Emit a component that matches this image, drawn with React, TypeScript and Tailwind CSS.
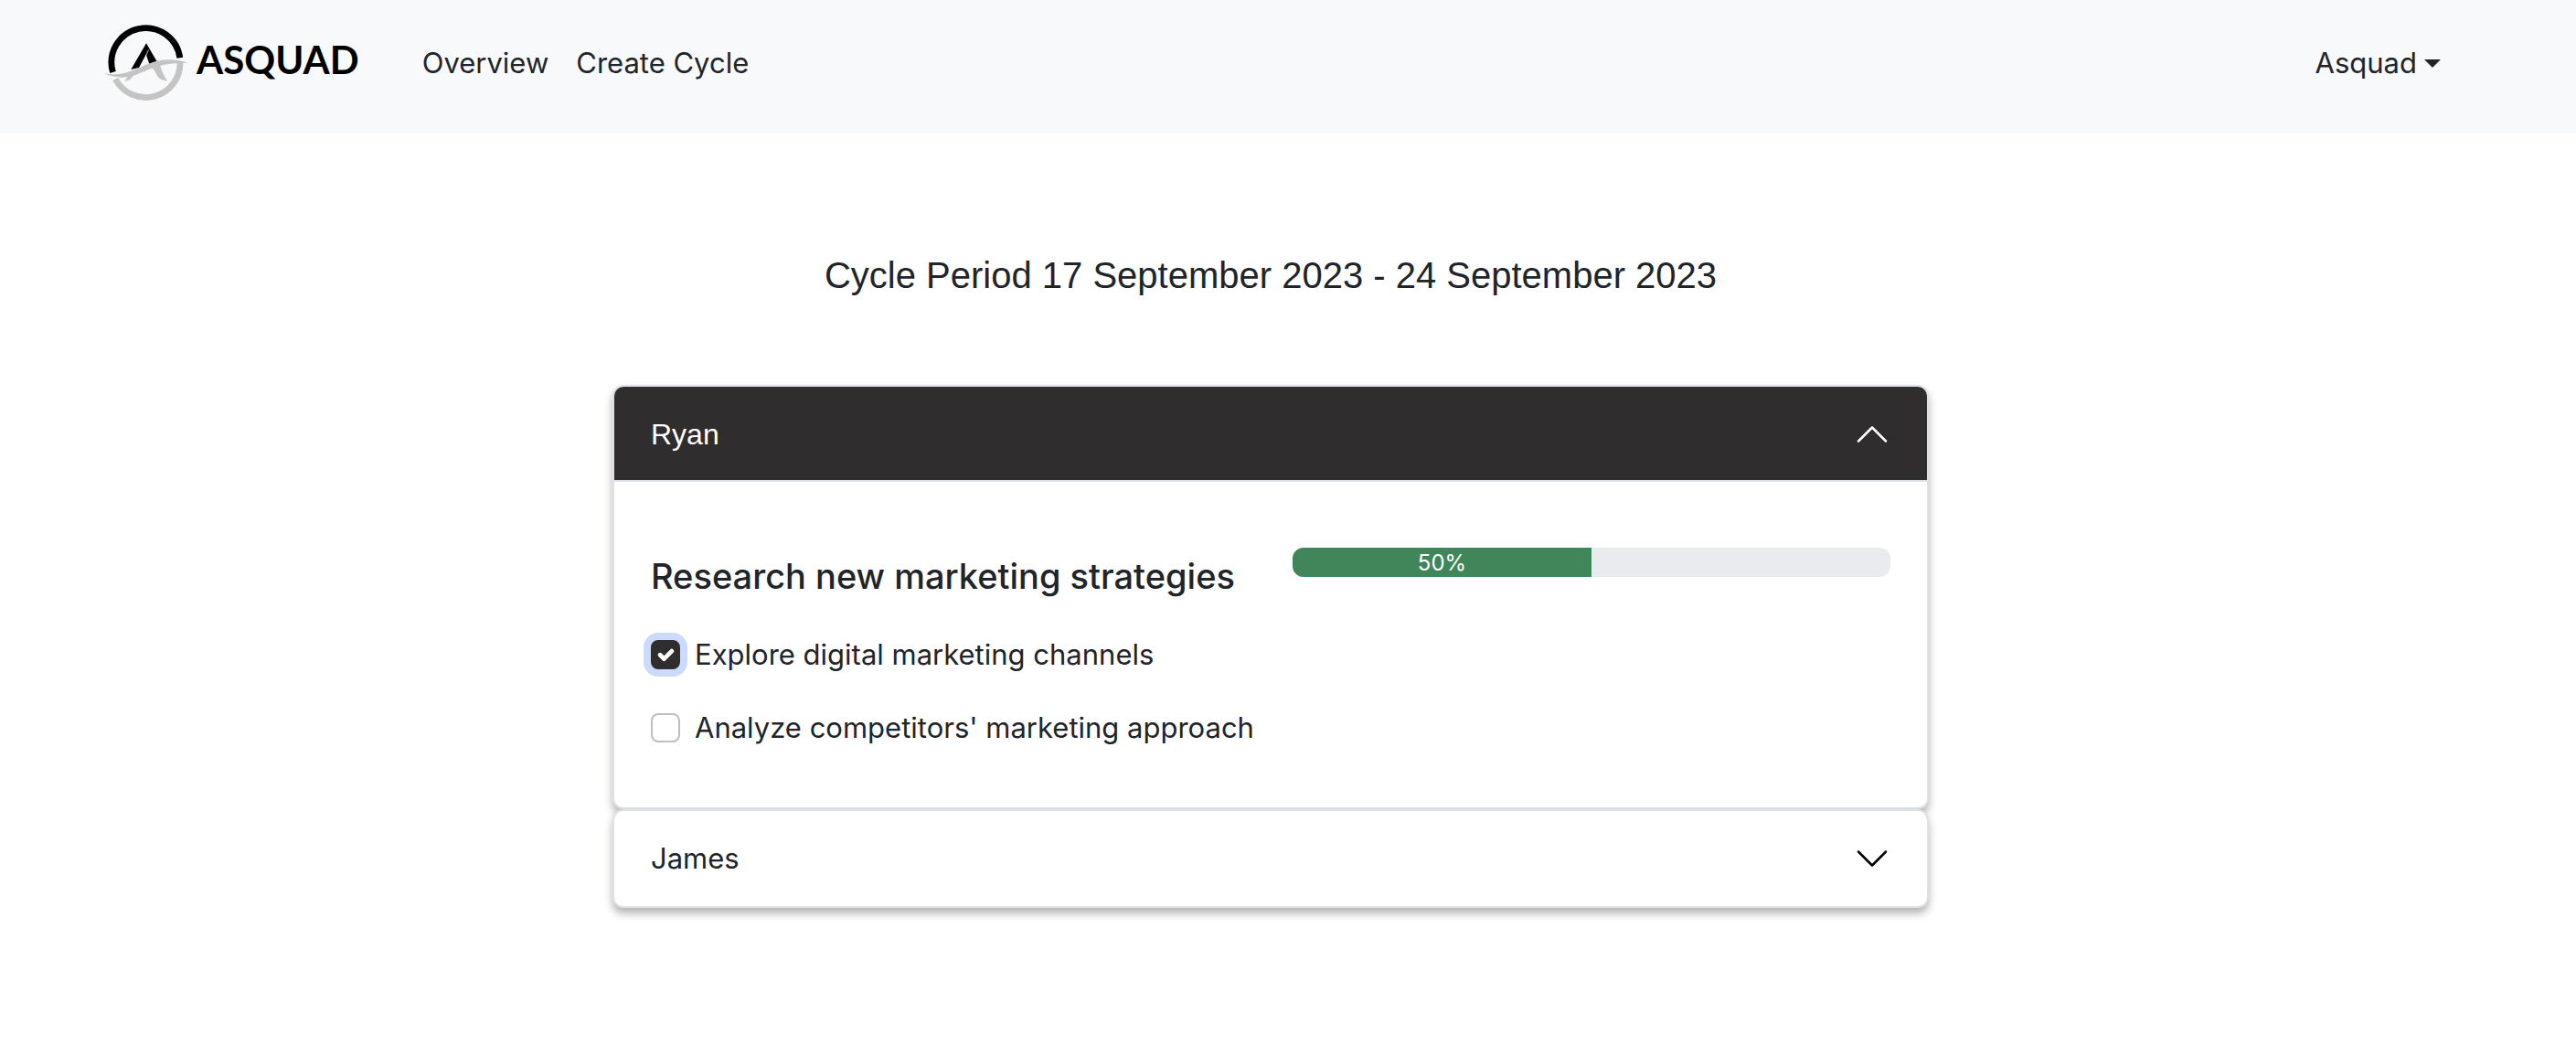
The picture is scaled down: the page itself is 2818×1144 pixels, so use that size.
import React, { useState } from "react";

const tasksSeed = [
  { id: "explore", label: "Explore digital marketing channels", done: true },
  { id: "analyze", label: "Analyze competitors' marketing approach", done: false },
];

function Logo() {
  return (
    <a href="#" className="flex items-start text-black" aria-label="Asquad home">
      <svg viewBox="0 0 93 84" className="h-[84px] w-[93px]" aria-hidden="true">
        <path d="M9.5 53 A37.6 37.6 0 1 1 82.8 37.3" fill="none" stroke="#000" strokeWidth="6.8" />
        <path d="M12.2 60.5 A37.6 37.6 0 0 0 83 41.5" fill="none" stroke="#c4c4c4" strokeWidth="6.8" />
        <path d="M29.3 50 L46 21.3 L57.5 41 L49.3 44 L45.8 33.5 L38 48 Z" fill="#000" />
        <path d="M48.6 28.500 L45.4 35.5" stroke="#f8f9fb" strokeWidth="0.8" />
        <path d="M-0.7 54 Q12 56.5 24 53.500 C36 50 46 43.500 58 40.700 Q75 37 92 42.700 Q74 42.500 61 46 C49 49.500 41 53.500 31.500 57 Q29 62.500 22 62.700 Q24 61 25.500 58.300 Q12 60 -0.7 54 Z" fill="#c4c4c4" />
        <path d="M53 48.300 L61 45 Q64 55.500 69.300 62.700 Q61.500 62 58.500 57.500 Z" fill="#c4c4c4" />
      </svg>
      <span className="ml-2 pt-[13px] font-['Lato'] text-[42px] leading-[52px] font-bold">ASQUAD</span>
    </a>
  );
}

function Chevron({ up }: { up?: boolean }) {
  return (
    <svg viewBox="0 0 16 16" className="size-10" fill="none" stroke="currentColor" strokeLinecap="round" strokeLinejoin="round" aria-hidden="true">
      <path d={up ? "M2 11 8 5l6 6" : "m2 5 6 6 6-6"} />
    </svg>
  );
}

export default function App() {
  const [tasks, setTasks] = useState(tasksSeed);
  const progress = Math.round((tasks.filter((t) => t.done).length / tasks.length) * 100);
  const toggle = (id: string) =>
    setTasks(tasks.map((t) => (t.id === id ? { ...t, done: !t.done } : t)));

  return (
    <div className="min-h-screen bg-white font-['Inter',sans-serif] text-[31px] leading-[48px] text-[#212529]">
      <header className="flex items-start bg-[#f8f9fb] pt-[26px] pr-[148px] pb-9 pl-[114px]">
        <Logo />
        <nav className="ml-[69px] flex flex-1 gap-[30px] pt-[19px]">
          <a href="#overview">Overview</a>
          <a href="#create">Create Cycle</a>
        </nav>
        <button type="button" className="mt-[19px] flex items-center gap-2">
          Asquad
          <svg viewBox="0 0 18 9" className="h-[9px] w-[18px]" fill="currentColor" aria-hidden="true">
            <path d="M0 0h18L9 9z" />
          </svg>
        </button>
      </header>

      <main className="pr-[38px] pb-16">
        <h1 className="pt-[131px] text-center font-['Liberation_Sans',Arial,sans-serif] text-[40px] leading-[48px]">
          Cycle Period 17 September 2023 - 24 September 2023
        </h1>

        <div className="mx-auto mt-24 max-w-[1440px]">
          <section className="rounded-xl border-2 border-[#dee2e6] bg-white shadow-[0_6px_10px_rgba(0,0,0,0.3)]">
            <h2 className="border-b-2 border-[#dee2e6] font-['Liberation_Sans',Arial,sans-serif] text-[32px]">
              <button type="button" aria-expanded="true" className="flex w-full items-center justify-between rounded-t-[10px] bg-[#302d2e] px-10 pt-7 pb-[26px] text-white">
                Ryan
                <Chevron up />
              </button>
            </h2>
            <div className="grid grid-cols-2 gap-12 px-10 pt-[72px] pb-[63px]">
              <div className="pt-[7px]">
                <h3 className="text-[38px] font-medium whitespace-nowrap">Research new marketing strategies</h3>
                <ul className="mt-[38px] flex flex-col gap-8 whitespace-nowrap">
                  {tasks.map((t) => (
                    <li key={t.id} className="flex items-center gap-4">
                      <span className="relative size-8">
                        <input
                          id={t.id}
                          type="checkbox"
                          checked={t.done}
                          onChange={() => toggle(t.id)}
                          className="block size-8 appearance-none rounded-lg border-2 border-[#bfbfbf] bg-white checked:border-[#302d2e] checked:bg-[#302d2e] checked:ring-8 checked:ring-[#cbdafe]"
                        />
                        {t.done && (
                          <svg viewBox="0 0 20 20" className="pointer-events-none absolute inset-0 size-8" fill="none" stroke="#fff" strokeWidth="3" strokeLinecap="round" strokeLinejoin="round" aria-hidden="true">
                            <path d="m6.300 10.200 2.700 2.700 5.300-5.300" />
                          </svg>
                        )}
                      </span>
                      <label htmlFor={t.id}>{t.label}</label>
                    </li>
                  ))}
                </ul>
              </div>
              <div role="progressbar" aria-valuenow={progress} aria-valuemin={0} aria-valuemax={100} className="h-8 overflow-hidden rounded-xl bg-[#e9ebef]">
                <div className="h-full bg-[#41865a] text-center text-[24px] leading-[34px] text-white" style={{ width: `${progress}%` }}>
                  {progress}%
                </div>
              </div>
            </div>
          </section>

          <section className="rounded-xl border-2 border-[#dee2e6] bg-white shadow-[0_6px_10px_rgba(0,0,0,0.3)]">
            <h2>
              <button type="button" aria-expanded="false" className="flex w-full items-center justify-between px-10 py-7">
                James
                <span className="text-black"><Chevron /></span>
              </button>
            </h2>
          </section>
        </div>
      </main>
    </div>
  );
}
